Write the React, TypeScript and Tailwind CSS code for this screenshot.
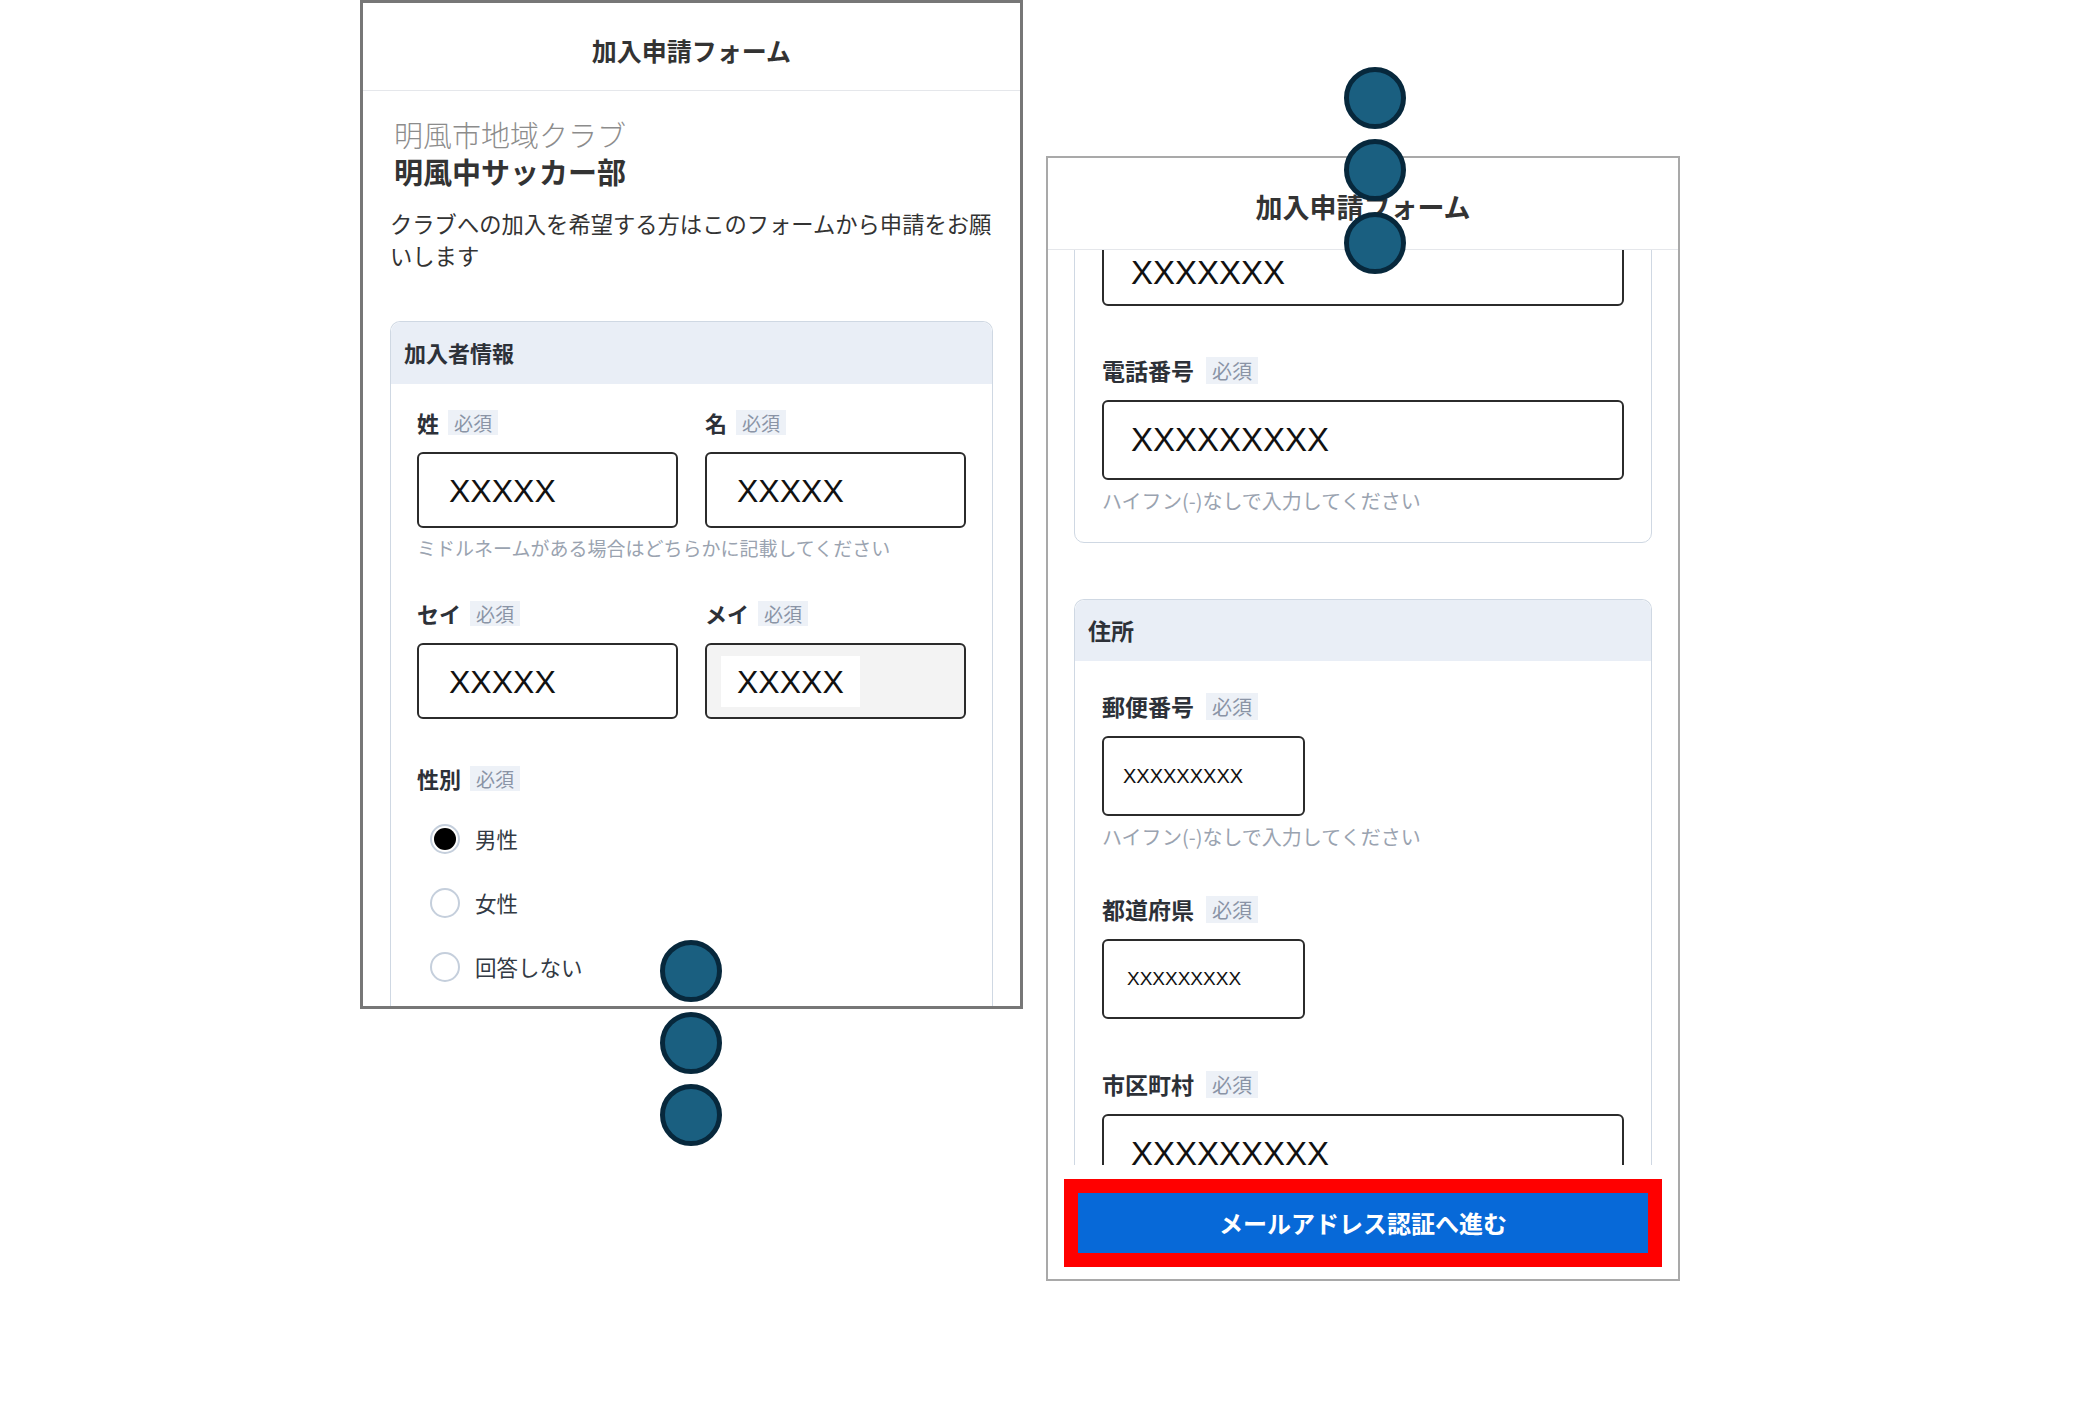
import React from "react";

const JP = { fontFamily: '"Noto Sans CJK JP", "Noto Sans", sans-serif' };

function Badge({ big }: { big?: boolean }) {
  return (
    <span
      className={
        big
          ? "inline-flex h-[27px] items-center bg-[#edf1f7] px-[6px] text-[20px] leading-[27px] text-[#8a94a6]"
          : "inline-flex h-[25px] items-center bg-[#edf1f7] px-[6px] text-[19px] leading-[25px] text-[#8a94a6]"
      }
    >
      必須
    </span>
  );
}

function LeftLabel({ text }: { text: string }) {
  return (
    <div className="flex h-[30px] items-center gap-[9px]">
      <span className="text-[22px] font-bold leading-[30px] text-[#2d3138]">{text}</span>
      <Badge />
    </div>
  );
}

function RightLabel({ text }: { text: string }) {
  return (
    <div className="flex h-[30px] items-center gap-[12px]">
      <span className="text-[23px] font-bold leading-[30px] text-[#2d3138]">{text}</span>
      <Badge big />
    </div>
  );
}

function LeftInput({ value, filled }: { value: string; filled?: boolean }) {
  if (filled) {
    return (
      <div className="mt-[15px] flex h-[76px] items-center rounded-[6px] border-2 border-[#2b2b2b] bg-[#f3f3f3] pl-[14px]">
        <span
          className="flex h-[51px] items-center bg-white px-[16px] pt-[2px] text-[32px] text-[#111]"
          style={{ fontFamily: '"Liberation Sans", Arial, sans-serif' }}
        >
          {value}
        </span>
      </div>
    );
  }
  return (
    <div
      className="mt-[15px] flex h-[76px] items-center rounded-[6px] border-2 border-[#2b2b2b] bg-white pl-[30px] pt-[2px] text-[32px] text-[#111]"
      style={{ fontFamily: '"Liberation Sans", Arial, sans-serif' }}
    >
      {value}
    </div>
  );
}

function RightInput({
  value,
  small,
  pad,
  size,
}: {
  value: string;
  small?: boolean;
  pad?: string;
  size?: string;
}) {
  return (
    <div
      className={
        "mt-[15px] flex h-[80px] shrink-0 items-center rounded-[6px] border-2 border-[#2b2b2b] bg-white text-[#111] " +
        (small ? "w-[203px] " : "w-full ") +
        (pad ?? "pl-[27px] ") +
        (size ?? "text-[33px]")
      }
      style={{ fontFamily: '"Liberation Sans", Arial, sans-serif' }}
    >
      {value}
    </div>
  );
}

function Radio({ label, checked }: { label: string; checked?: boolean }) {
  return (
    <div className="flex h-[30px] items-center gap-[15px] pl-[13px]">
      <span className="flex h-[30px] w-[30px] items-center justify-center rounded-full border-2 border-[#c5cfdc] bg-white">
        {checked && <span className="h-[22px] w-[22px] rounded-full bg-black" />}
      </span>
      <span className="text-[21.5px] leading-[30px] text-[#333a44]">{label}</span>
    </div>
  );
}

function Dot({ className }: { className: string }) {
  return (
    <div
      className={
        "absolute h-[62px] w-[62px] rounded-full border-[5px] border-[#07283c] bg-[#1a5f80] " + className
      }
    />
  );
}

export default function App() {
  return (
    <div className="relative h-[1403px] w-[2097px] overflow-hidden bg-white" style={JP}>
      <div className="flex items-start pl-[360px]">
        {/* Left panel */}
        <div className="flex h-[1009px] w-[663px] shrink-0 flex-col overflow-hidden border-[3px] border-[#777777] bg-white">
          <div className="h-[88px] shrink-0 border-b border-[#e5e7eb] pt-[31px] text-center text-[25px] font-bold leading-[32px] text-[#333]">
            加入申請フォーム
          </div>
          <div className="px-[27px] pt-[25px]">
            <div className="pl-[4px] text-[29px] font-light leading-[37px] text-[#8c8c8c]">明風市地域クラブ</div>
            <div className="pl-[4px] text-[29px] font-bold leading-[37px] text-[#333]">明風中サッカー部</div>
            <p className="mt-[17px] text-[22.3px] leading-[32px] text-[#333]">
              クラブへの加入を希望する方はこのフォームから申請をお願いします
            </p>
            <div className="mt-[50px] rounded-t-[10px] border border-b-0 border-[#cfd8e3]">
              <div className="h-[62px] rounded-t-[10px] bg-[#e9eef6] pl-[13px] text-[22px] font-bold leading-[60px] text-[#2d3138]">
                加入者情報
              </div>
              <div className="px-[26px] pt-[23px] pb-[40px]">
                <div className="grid grid-cols-2 gap-x-[27px]">
                  <div>
                    <LeftLabel text="姓" />
                    <LeftInput value="XXXXX" />
                  </div>
                  <div>
                    <LeftLabel text="名" />
                    <LeftInput value="XXXXX" />
                  </div>
                </div>
                <div className="mt-[10px] text-[19px] leading-[20px] text-[#9aa3b0]">
                  ミドルネームがある場合はどちらかに記載してください
                </div>
                <div className="mt-[40px] grid grid-cols-2 gap-x-[27px]">
                  <div>
                    <LeftLabel text="セイ" />
                    <LeftInput value="XXXXX" />
                  </div>
                  <div>
                    <LeftLabel text="メイ" />
                    <LeftInput value="XXXXX" filled />
                  </div>
                </div>
                <div className="mt-[44px]">
                  <LeftLabel text="性別" />
                </div>
                <div className="mt-[31px] flex flex-col gap-[34px]">
                  <Radio label="男性" checked />
                  <Radio label="女性" />
                  <Radio label="回答しない" />
                </div>
              </div>
            </div>
          </div>
        </div>

        {/* Right panel */}
        <div className="ml-[23px] mt-[156px] flex h-[1125px] w-[634px] shrink-0 flex-col border-2 border-[#a9a9a9] bg-white">
          <div className="h-[92px] shrink-0 border-b border-[#e5e7eb] pt-[32px] text-center text-[27px] font-bold leading-[34px] text-[#333]">
            加入申請フォーム
          </div>
          <div className="h-[915px] shrink-0 overflow-hidden px-[26px]">
            <div className="-mt-[97px]">
              <div className="rounded-b-[10px] border border-[#cfd8e3] px-[27px] pt-[27px] pb-[30px]">
                <RightLabel text="メールアドレス" />
                <RightInput value="XXXXXXX" pad="pl-[27px] pt-[14px] " />
                <div className="mt-[49px]">
                  <RightLabel text="電話番号" />
                  <RightInput value="XXXXXXXXX" />
                  <div className="mt-[10px] text-[20px] leading-[22px] text-[#9aa3b0]">
                    ハイフン(-)なしで入力してください
                  </div>
                </div>
              </div>
              <div className="mt-[56px] rounded-t-[10px] border border-b-0 border-[#cfd8e3]">
                <div className="h-[61px] rounded-t-[10px] bg-[#e9eef6] pl-[13px] text-[23px] font-bold leading-[61px] text-[#2d3138]">
                  住所
                </div>
                <div className="px-[27px] pt-[30px] pb-[40px]">
                  <RightLabel text="郵便番号" />
                  <RightInput value="XXXXXXXXX" small pad="pl-[19px] " size="text-[20px]" />
                  <div className="mt-[10px] text-[20px] leading-[22px] text-[#9aa3b0]">
                    ハイフン(-)なしで入力してください
                  </div>
                  <div className="mt-[46px]">
                    <RightLabel text="都道府県" />
                    <RightInput value="XXXXXXXXX" small pad="pl-[23px] " size="text-[19px]" />
                  </div>
                  <div className="mt-[50px]">
                    <RightLabel text="市区町村" />
                    <RightInput value="XXXXXXXXX" />
                  </div>
                </div>
              </div>
            </div>
          </div>
          <div className="px-[16px] pt-[14px]">
            <div className="h-[88px] border-[14px] border-[#ff0000]">
              <div className="flex h-full items-center justify-center bg-[#0769d8] text-[24px] font-bold text-white">
                メールアドレス認証へ進む
              </div>
            </div>
          </div>
        </div>
      </div>

      {/* annotation dots */}
      <Dot className="left-[660px] top-[940px]" />
      <Dot className="left-[660px] top-[1012px]" />
      <Dot className="left-[660px] top-[1084px]" />
      <Dot className="left-[1344px] top-[67px]" />
      <Dot className="left-[1344px] top-[139px]" />
      <Dot className="left-[1344px] top-[212px]" />
    </div>
  );
}
